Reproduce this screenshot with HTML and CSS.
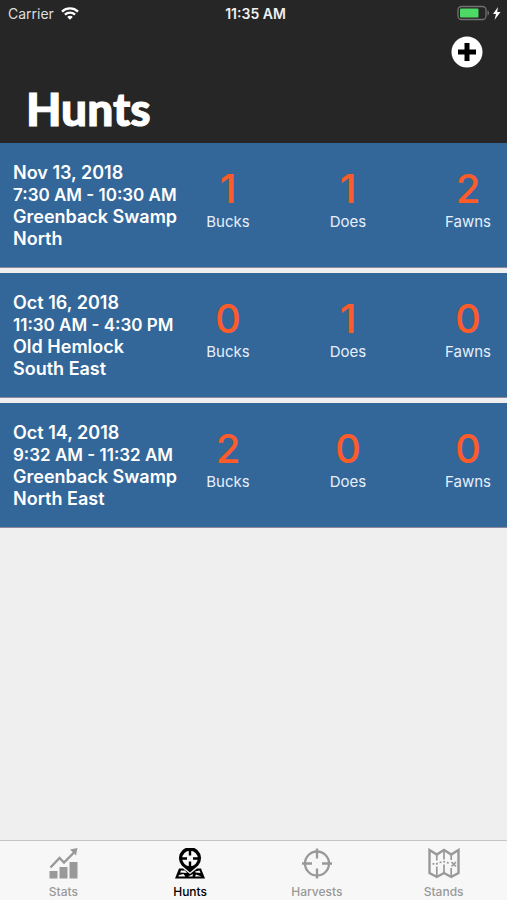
FILE: index.html
```html
<!DOCTYPE html>
<html lang="en">
<head>
<meta charset="utf-8">
<meta name="viewport" content="width=device-width, initial-scale=1">
<title>Hunts</title>
<link rel="stylesheet" href="styles.css">
</head>
<body>
<div class="app">
  <header class="header">
    <div class="status">
      <div class="carrier">
        <span>Carrier</span>
        <svg width="18" height="13" viewBox="0 0 18 13" fill="none" stroke="#fff" stroke-width="2.3" aria-hidden="true">
          <path d="M1 4.600C5.500 .4 12.500 .4 17 4.600"/>
          <path d="M3.900 7.700C6.800 5 11.200 5 14.100 7.700"/>
          <path d="M9 12.700 6.200 9.900C7.800 8.500 10.200 8.500 11.800 9.900Z" fill="#fff" stroke="none"/>
        </svg>
      </div>
      <time class="clock">11:35 AM</time>
      <svg class="battery" width="46" height="16" viewBox="0 0 46 16" aria-hidden="true">
        <rect x="1" y="1.500" width="28" height="13" rx="3.500" fill="none" stroke="#707070" stroke-width="1.300"/>
        <rect x="3" y="3.500" width="18.500" height="9" rx="1" fill="#4cd964"/>
        <path d="M30.500 5.500C32.500 6 32.500 10 30.500 10.500Z" fill="#707070"/>
        <path d="M41 2 36 9H39L37.500 15 43.500 7H40.200Z" fill="#fff"/>
      </svg>
    </div>
    <div class="actions">
      <button class="add" type="button" aria-label="Add hunt">
        <svg width="32" height="32" viewBox="0 0 32 32" aria-hidden="true">
          <circle cx="16" cy="16" r="15.500" fill="#fff"/>
          <path d="M16 7V25M7 16H25" stroke="#000" stroke-width="5"/>
        </svg>
      </button>
    </div>
    <h1 class="title">Hunts</h1>
  </header>

  <main class="hunts">
    <article class="hunt">
      <div class="details">
        <div>Nov 13, 2018</div>
        <div class="hours">7:30 AM - 10:30 AM</div>
        <div>Greenback Swamp</div>
        <div>North</div>
      </div>
      <div class="counts">
        <div class="count"><strong>1</strong><span>Bucks</span></div>
        <div class="count"><strong>1</strong><span>Does</span></div>
        <div class="count"><strong>2</strong><span>Fawns</span></div>
      </div>
    </article>
    <article class="hunt">
      <div class="details">
        <div>Oct 16, 2018</div>
        <div class="hours">11:30 AM - 4:30 PM</div>
        <div>Old Hemlock</div>
        <div>South East</div>
      </div>
      <div class="counts">
        <div class="count"><strong>0</strong><span>Bucks</span></div>
        <div class="count"><strong>1</strong><span>Does</span></div>
        <div class="count"><strong>0</strong><span>Fawns</span></div>
      </div>
    </article>
    <article class="hunt">
      <div class="details">
        <div>Oct 14, 2018</div>
        <div class="hours">9:32 AM - 11:32 AM</div>
        <div>Greenback Swamp</div>
        <div>North East</div>
      </div>
      <div class="counts">
        <div class="count"><strong>2</strong><span>Bucks</span></div>
        <div class="count"><strong>0</strong><span>Does</span></div>
        <div class="count"><strong>0</strong><span>Fawns</span></div>
      </div>
    </article>
  </main>

  <nav class="tabs">
    <a class="tab" href="#stats">
      <svg width="32" height="32" viewBox="0 0 32 32" aria-hidden="true">
        <path d="M2.500 23H10.500V30.500H2.500ZM12.500 19H20.500V30.500H12.500ZM22.500 14H30.500V30.500H22.500Z" fill="currentColor"/>
        <path d="M3.500 19.500 12.500 10 17 14.500 27 4.500" fill="none" stroke="currentColor" stroke-width="2.400"/>
        <path d="M23 1.500 30.500 0 29 7.500Z" fill="currentColor"/>
      </svg>
      <span>Stats</span>
    </a>
    <a class="tab active" href="#hunts" aria-current="page">
      <svg width="32" height="32" viewBox="0 0 32 32" fill="none" stroke="currentColor" aria-hidden="true">
        <path d="M9 20.500H5L1 30.500H31L27 20.500H23L16 26Z" fill="currentColor" stroke="none"/>
        <path d="M7 22.500 11 22.500 13 25 6 24.500ZM5 27 9.500 26 11.500 28.500H4.300ZM21 23.500 25.500 22.500 26.500 25 21.500 24.500ZM14 28.500 19 26 18.500 28.500ZM21 28.500 22 26.500 27.500 28.500Z" fill="#f7f7f7" stroke="none"/>
        <path d="M16 24.500 7.800 17.500A11 11 0 1 1 24.200 17.500Z" fill="currentColor" stroke="none"/>
        <circle cx="16" cy="10.500" r="7.800" fill="#f7f7f7" stroke="none"/>
        <path d="M16 2V7.500M16 13.500V19M7.500 10.500H13M19 10.500H24.500" stroke-width="2.400"/>
      </svg>
      <span>Hunts</span>
    </a>
    <a class="tab" href="#harvests">
      <svg width="32" height="32" viewBox="0 0 32 32" fill="none" stroke="currentColor" stroke-width="2.300" aria-hidden="true">
        <circle cx="16" cy="15.500" r="12"/>
        <path d="M16 .5V10.500M16 20.500V30.500M1 15.500H11M21 15.500H31"/>
      </svg>
      <span>Harvests</span>
    </a>
    <a class="tab" href="#stands">
      <svg width="32" height="32" viewBox="0 0 32 32" fill="none" stroke="currentColor" stroke-width="2.400" aria-hidden="true">
        <path d="M1.500 2 8.800 6.500 16 2 23.200 6.500 30.500 2V25L23.200 29 16 25 8.800 29 1.500 25Z"/>
        <path d="M8.800 6.500V12.500M8.800 18.500V29M16 2V11.500M16 16.500V25M23.200 6.500V12M23.200 20V29" stroke-width="1.700"/>
        <path d="M4.500 15.500 7 16.500 11 15 15 13.500 19 14.500 21.500 15.500" stroke-width="1.700" stroke-dasharray="2 1.800"/>
        <path d="M23.500 14 28 18.500M28 14 23.500 18.500" stroke-width="1.700"/>
      </svg>
      <span>Stands</span>
    </a>
  </nav>
</div>
</body>
</html>
```

FILE: styles.css
```css
* {
  box-sizing: border-box;
}

body {
  margin: 0;
  background: #efefef;
  font-family: Inter, "Liberation Sans", sans-serif;
}

svg {
  display: block;
}

.app {
  display: flex;
  flex-direction: column;
  min-height: 100vh;
}

.header {
  background: #262626;
  color: #fff;
  padding-bottom: 8px;
}

.status {
  display: grid;
  grid-template-columns: 1fr auto 1fr;
  align-items: center;
  height: 26px;
  padding: 0 4px 0 8px;
  font-size: 14px;
}

.carrier {
  display: flex;
  align-items: center;
  gap: 7px;
  color: #dedede;
}

.clock {
  font-weight: 600;
  color: #f0f0f0;
}

.battery {
  justify-self: end;
}

.actions {
  display: flex;
  justify-content: flex-end;
  padding: 10px 24px 0;
}

.add {
  padding: 0;
  border: 0;
  border-radius: 50%;
  background: none;
}

.title {
  margin: 15px 26px 0;
  font-family: Lato, Inter, sans-serif;
  font-size: 46px;
  font-weight: 900;
  line-height: 52px;
  -webkit-text-stroke: 1px #fff;
}

.hunts {
  flex: 1;
  display: flex;
  flex-direction: column;
  gap: 5px;
}

.hunt {
  display: flex;
  gap: 16px;
  padding: 19px 16px 17px 13px;
  border-bottom: 1px solid #8c8a9c;
  background: #33679a;
  color: #fff;
}

.details {
  flex: 0 0 176px;
  font-size: 18px;
  font-weight: 600;
  line-height: 22px;
  white-space: nowrap;
}

.hours {
  font-size: 17px;
}

.counts {
  flex: 1;
  display: flex;
  justify-content: space-between;
}

.count {
  display: flex;
  flex-direction: column;
  align-items: center;
  width: 46px;
  padding-top: 5px;
}

.count strong {
  color: #fc5b2a;
  font-size: 40px;
  font-weight: 500;
  line-height: 44px;
}

.count span {
  color: #e6effa;
  font-size: 15px;
  line-height: 22px;
}

.tabs {
  display: grid;
  grid-template-columns: repeat(4, 1fr);
  border-top: 1px solid #c6c6c6;
  background: #f7f7f7;
}

.tab {
  display: flex;
  flex-direction: column;
  align-items: center;
  gap: 4px;
  padding: 7px 0 0;
  color: #999;
  font-size: 12px;
  font-weight: 500;
  line-height: 16px;
  text-decoration: none;
}

.tab.active {
  color: #000;
}
```
